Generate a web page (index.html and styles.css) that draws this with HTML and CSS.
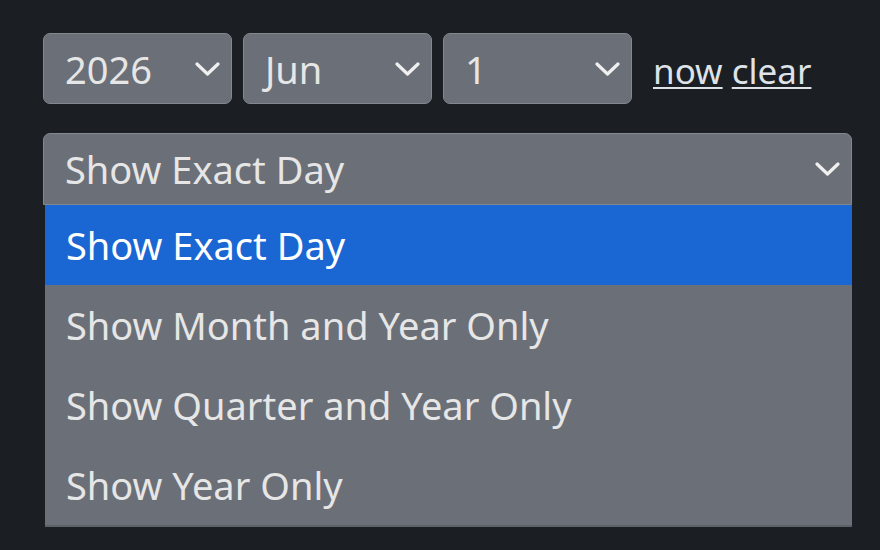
FILE: index.html
```html
<!DOCTYPE html>
<html lang="en">
<head>
<meta charset="utf-8">
<title>Date picker</title>
<link rel="stylesheet" href="styles.css">
</head>
<body>
<div class="wrap">
  <div class="row">
    <div class="select small"><span>2026</span><svg class="chev" viewBox="0 0 25 14"><path d="M2 2 L12.5 12 L23 2"/></svg></div>
    <div class="select small"><span>Jun</span><svg class="chev" viewBox="0 0 25 14"><path d="M2 2 L12.5 12 L23 2"/></svg></div>
    <div class="select small"><span>1</span><svg class="chev" viewBox="0 0 25 14"><path d="M2 2 L12.5 12 L23 2"/></svg></div>
    <div class="links"><a href="#">now</a> <a href="#">clear</a></div>
  </div>
  <div class="select wide"><span>Show Exact Day</span><svg class="chev" viewBox="0 0 25 14"><path d="M2 2 L12.5 12 L23 2"/></svg></div>
  <ul class="list">
    <li class="opt active">Show Exact Day</li>
    <li class="opt">Show Month and Year Only</li>
    <li class="opt">Show Quarter and Year Only</li>
    <li class="opt">Show Year Only</li>
  </ul>
</div>
</body>
</html>
```
FILE: styles.css
```css
html, body {
  margin: 0;
  padding: 0;
  background: #1b1e23;
  height: 100%;
}
body {
  font-family: "Noto Sans", "Open Sans", sans-serif;
  color: #e4e4e4;
}
.wrap {
  padding: 33px 0 0 43px;
}
.row {
  display: flex;
  align-items: center;
  gap: 11px;
}
.select {
  box-sizing: border-box;
  display: flex;
  align-items: center;
  justify-content: space-between;
  background: #6b6f77;
  border: 1.5px solid #83878e;
  border-radius: 7px;
  padding: 0 11px 0 21px;
  font-size: 38px;
  color: #e6e6e6;
}
.select.small {
  width: 189px;
  height: 71px;
}
.select.wide {
  width: 809px;
  height: 72px;
  margin-top: 29px;
  border-radius: 7px 7px 0 0;
}
.chev {
  width: 25px;
  height: 14px;
  flex: none;
}
.chev path {
  fill: none;
  stroke: #f0f0f0;
  stroke-width: 3.2;
  stroke-linecap: round;
  stroke-linejoin: round;
}
.links {
  margin-left: 10px;
  font-size: 35px;
  line-height: 1;
  padding-top: 3px;
}
.links a {
  color: #dde3e9;
  text-decoration: underline;
  text-decoration-thickness: 2px;
  text-underline-offset: 3px;
}
.list {
  list-style: none;
  margin: 0 0 0 2px;
  padding: 0;
  width: 807px;
  background: #6b6f77;
  border-bottom: 2px solid #5d6168;
}
.opt {
  box-sizing: border-box;
  height: 80px;
  display: flex;
  align-items: center;
  padding-left: 21px;
  font-size: 38px;
  color: #e6e6e6;
}
.opt.active {
  background: #1a66d3;
  color: #ffffff;
}
```
